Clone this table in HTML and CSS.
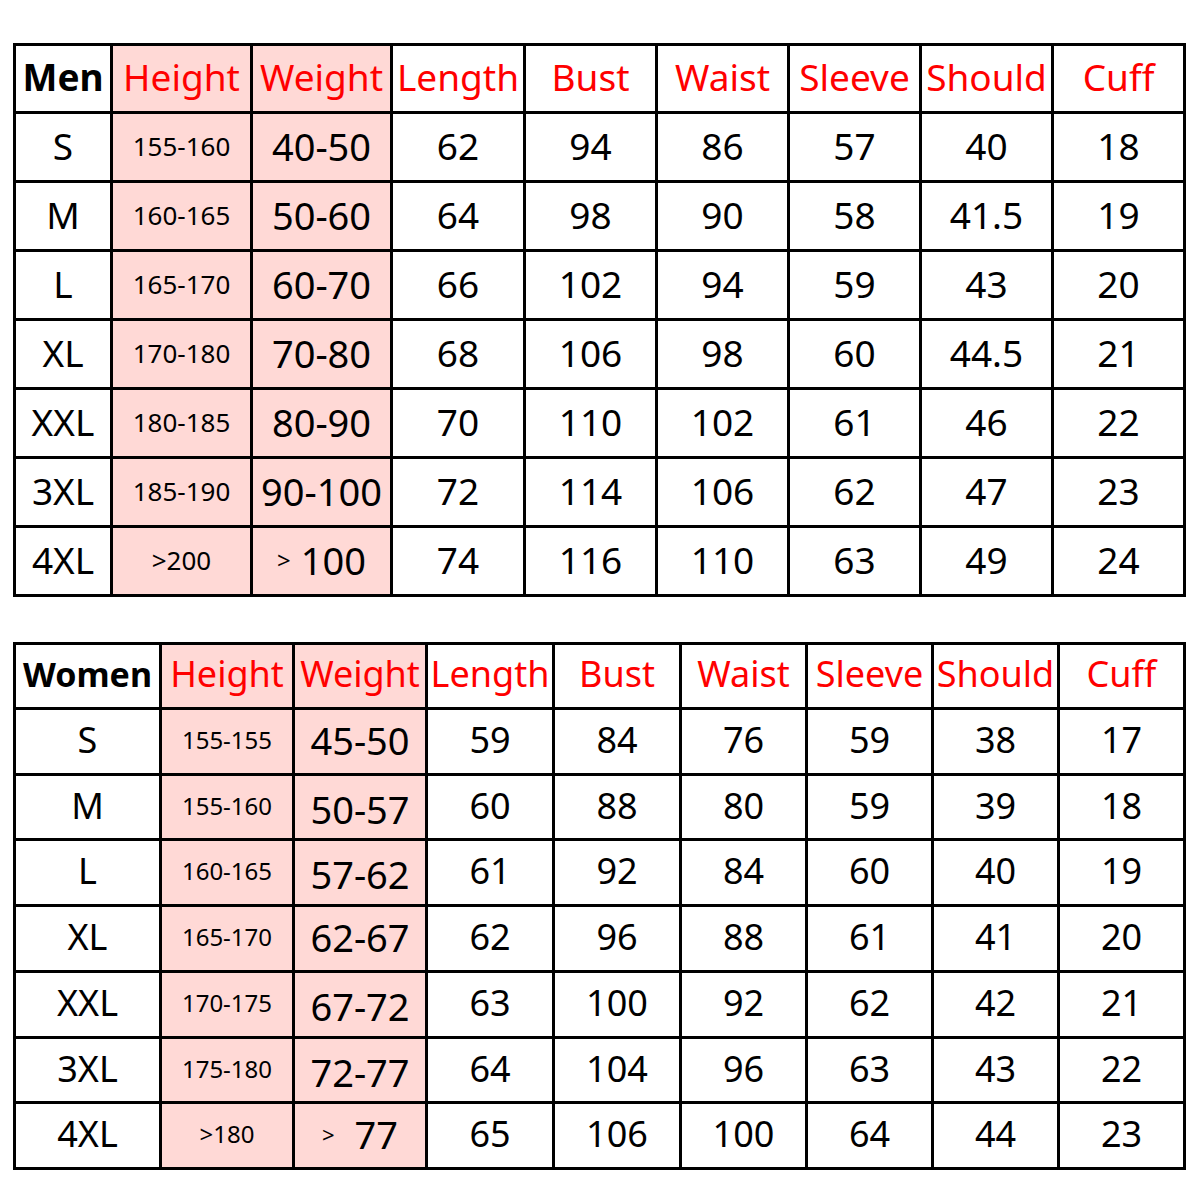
FILE: index.html
```html
<!DOCTYPE html>
<html>
<head>
<meta charset="utf-8">
<link rel="stylesheet" href="styles.css">
</head>
<body>
<div class="chart men">
  <div class="c hd b">Men</div><div class="c hd pk">Height</div><div class="c hd pk">Weight</div><div class="c hd">Length</div><div class="c hd">Bust</div><div class="c hd">Waist</div><div class="c hd">Sleeve</div><div class="c hd">Should</div><div class="c hd">Cuff</div>

  <div class="c">S</div><div class="c pk h">155-160</div><div class="c pk w">40-50</div><div class="c">62</div><div class="c">94</div><div class="c">86</div><div class="c">57</div><div class="c">40</div><div class="c">18</div>
  <div class="c">M</div><div class="c pk h">160-165</div><div class="c pk w">50-60</div><div class="c">64</div><div class="c">98</div><div class="c">90</div><div class="c">58</div><div class="c">41.5</div><div class="c">19</div>
  <div class="c">L</div><div class="c pk h">165-170</div><div class="c pk w">60-70</div><div class="c">66</div><div class="c">102</div><div class="c">94</div><div class="c">59</div><div class="c">43</div><div class="c">20</div>
  <div class="c">XL</div><div class="c pk h">170-180</div><div class="c pk w">70-80</div><div class="c">68</div><div class="c">106</div><div class="c">98</div><div class="c">60</div><div class="c">44.5</div><div class="c">21</div>
  <div class="c">XXL</div><div class="c pk h">180-185</div><div class="c pk w">80-90</div><div class="c">70</div><div class="c">110</div><div class="c">102</div><div class="c">61</div><div class="c">46</div><div class="c">22</div>
  <div class="c">3XL</div><div class="c pk h">185-190</div><div class="c pk w">90-100</div><div class="c">72</div><div class="c">114</div><div class="c">106</div><div class="c">62</div><div class="c">47</div><div class="c">23</div>
  <div class="c">4XL</div><div class="c pk h">&gt;200</div><div class="c pk w"><span class="gt">&gt;</span>&nbsp;100</div><div class="c">74</div><div class="c">116</div><div class="c">110</div><div class="c">63</div><div class="c">49</div><div class="c">24</div>
</div>

<div class="chart women">
  <div class="c hd b">Women</div><div class="c hd pk">Height</div><div class="c hd pk">Weight</div><div class="c hd">Length</div><div class="c hd">Bust</div><div class="c hd">Waist</div><div class="c hd">Sleeve</div><div class="c hd">Should</div><div class="c hd">Cuff</div>

  <div class="c">S</div><div class="c pk h">155-155</div><div class="c pk w">45-50</div><div class="c">59</div><div class="c">84</div><div class="c">76</div><div class="c">59</div><div class="c">38</div><div class="c">17</div>
  <div class="c">M</div><div class="c pk h">155-160</div><div class="c pk w low">50-57</div><div class="c">60</div><div class="c">88</div><div class="c">80</div><div class="c">59</div><div class="c">39</div><div class="c">18</div>
  <div class="c">L</div><div class="c pk h">160-165</div><div class="c pk w low">57-62</div><div class="c">61</div><div class="c">92</div><div class="c">84</div><div class="c">60</div><div class="c">40</div><div class="c">19</div>
  <div class="c">XL</div><div class="c pk h">165-170</div><div class="c pk w">62-67</div><div class="c">62</div><div class="c">96</div><div class="c">88</div><div class="c">61</div><div class="c">41</div><div class="c">20</div>
  <div class="c">XXL</div><div class="c pk h">170-175</div><div class="c pk w low">67-72</div><div class="c">63</div><div class="c">100</div><div class="c">92</div><div class="c">62</div><div class="c">42</div><div class="c">21</div>
  <div class="c">3XL</div><div class="c pk h">175-180</div><div class="c pk w low">72-77</div><div class="c">64</div><div class="c">104</div><div class="c">96</div><div class="c">63</div><div class="c">43</div><div class="c">22</div>
  <div class="c">4XL</div><div class="c pk h">&gt;180</div><div class="c pk w"><span class="gt">&gt;</span>&nbsp;&nbsp;77</div><div class="c">65</div><div class="c">106</div><div class="c">100</div><div class="c">64</div><div class="c">44</div><div class="c">23</div>
</div>
</body>
</html>
```

FILE: styles.css
```css
html, body {
  margin: 0;
  padding: 0;
  background: #ffffff;
}

body {
  padding: 43px 0 0 13px;
  font-family: "Noto Sans", "Open Sans", sans-serif;
  color: #000000;
}

.chart {
  display: grid;
  width: 1173px;
  box-sizing: border-box;
  background: #000000;
  padding: 3px;
  gap: 3px;
}

.men {
  grid-template-columns: 94px 137px 137px 130px 129px 129px 129px 129px 129px;
  grid-template-rows: 65px repeat(7, 66px);
}

.women {
  margin-top: 45px;
  grid-template-columns: 143px 130px 130px 124px 124px 123px 123px 123px 123px;
  grid-template-rows: 62px 63px 62px 63px 63px 63px 62px 63px;
}

.c {
  background: #ffffff;
  display: flex;
  align-items: center;
  justify-content: center;
  box-sizing: border-box;
  padding-bottom: 3px;
  font-size: 37px;
  line-height: 1;
  white-space: nowrap;
  overflow: hidden;
}

.pk {
  background: #ffd9d6;
}

.hd {
  color: #ff0000;
  font-size: 37px;
  padding-bottom: 4px;
}

.hd.b {
  color: #000000;
  font-weight: 700;
  font-size: 37px;
}

.h {
  font-size: 26px;
}

.w {
  font-size: 38px;
}

.gt {
  font-size: 24px;
}

.women .hd {
  font-size: 35px;
}

.women .hd.b {
  font-size: 34px;
}

.women .c {
  font-size: 36px;
}

.women .w {
  font-size: 38px;
}

.women .h {
  font-size: 24px;
}

.women .gt {
  font-size: 22px;
}

.women .low {
  padding-top: 3px;
  padding-bottom: 0;
}
```
